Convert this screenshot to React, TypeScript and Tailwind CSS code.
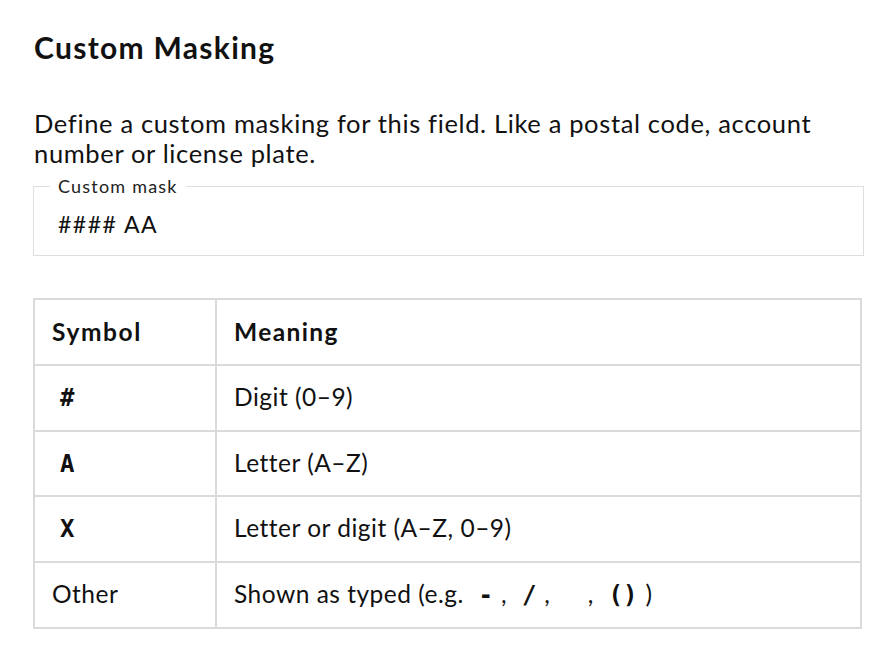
export default function App() {
  const rows = [
    { symbol: "#", meaning: "Digit (0–9)" },
    { symbol: "A", meaning: "Letter (A–Z)" },
    { symbol: "X", meaning: "Letter or digit (A–Z, 0–9)" },
  ]

  const code = "px-2 font-['DejaVu_Sans_Mono',monospace] font-bold text-[24px] tracking-normal"

  return (
    <div className="min-h-screen bg-white pl-[34px] pr-[30px] pt-[30px] font-['Lato',sans-serif] text-[#111]">
      {/* Heading */}
      <h1 className="text-[30px] font-bold leading-[34px] tracking-[1.3px]">Custom Masking</h1>

      {/* Description */}
      <p className="mt-[44px] text-[25.5px] leading-[30px] tracking-[0.65px]">
        Define a custom masking for this field. Like a postal code, account number or license plate.
      </p>

      {/* Mask input */}
      <fieldset className="mt-[7px] -ml-px border border-[#dedede] px-4 pb-[16px] pt-[13px]">
        <legend className="px-2 text-[18px] leading-[22px] tracking-[1.2px] text-[#222]">Custom mask</legend>
        <input
          type="text"
          defaultValue="#### AA"
          className="w-full px-2 text-[23px] leading-[28px] tracking-[1.5px] text-[#111] outline-none"
        />
      </fieldset>

      {/* Symbol table */}
      <table className="mt-[42px] -ml-px w-[829px] border-collapse border-2 border-[#dadada] text-[24.5px] tracking-[0.5px]">
        <thead>
          <tr className="h-[66px]">
            <th className="w-[182px] border-2 border-[#dadada] px-[17px] text-left font-bold tracking-[1.6px]">Symbol</th>
            <th className="border-2 border-[#dadada] px-[17px] text-left font-bold tracking-[1.4px]">Meaning</th>
          </tr>
        </thead>
        <tbody>
          {rows.map((r) => (
            <tr key={r.symbol} className="h-[65.5px]">
              <td className="border-2 border-[#dadada] px-[17px]">
                <code className={code}>{r.symbol}</code>
              </td>
              <td className="border-2 border-[#dadada] px-[17px]">{r.meaning}</td>
            </tr>
          ))}
          <tr className="h-[66px]">
            <td className="border-2 border-[#dadada] px-[17px]">Other</td>
            <td className="border-2 border-[#dadada] px-[17px]">
              Shown as typed (e.g. <code className={code}>-</code>, <code className={code}>/</code>,{" "}
              <code className={code}>{"\u00a0"}</code>, <code className={code}>()</code>)
            </td>
          </tr>
        </tbody>
      </table>
    </div>
  )
}
